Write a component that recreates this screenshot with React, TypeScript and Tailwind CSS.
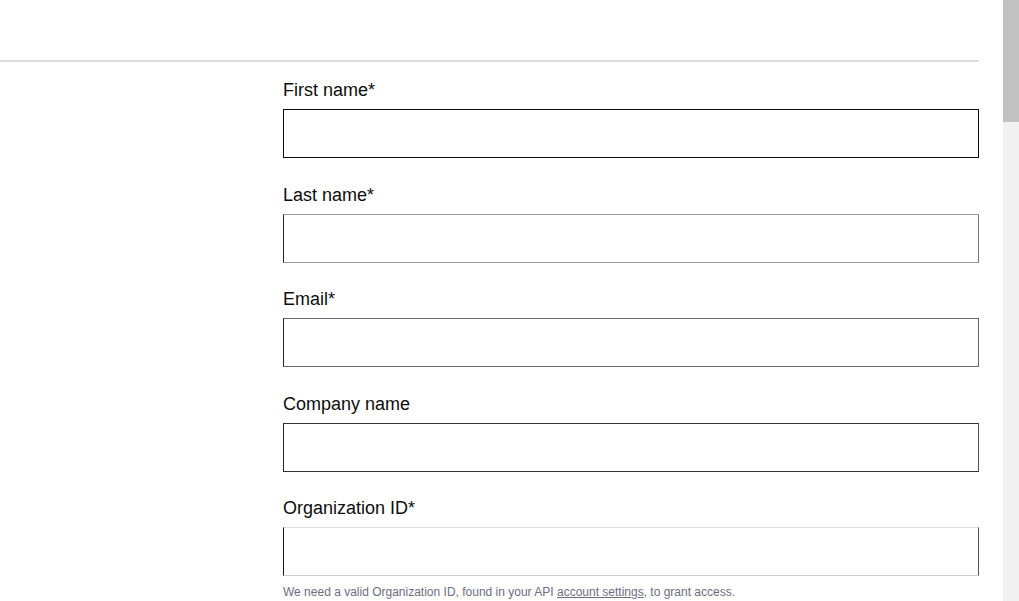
import React from "react";

interface FieldProps {
  label: string;
  required?: boolean;
  borderClass: string;
  help?: React.ReactNode;
}

const Field = ({ label, required, borderClass, help }: FieldProps) => {
  return (
    <div className="flex flex-col">
      <label className="text-[18px] leading-[28px] text-[#0d0d0d] mb-[5px]">
        {label}
        {required && "*"}
      </label>
      <input
        type="text"
        className={`h-[49px] w-full bg-white outline-none border ${borderClass}`}
      />
      {help && (
        <p className="mt-[8px] text-[12px] leading-[16px] text-[#6e6e80]">{help}</p>
      )}
    </div>
  );
};

export default function App() {
  return (
    <div
      className="flex h-[601px] w-[1019px] overflow-hidden bg-white"
      style={{ fontFamily: '"Liberation Sans", Arial, sans-serif' }}
    >
      <div className="flex flex-1 flex-col">
        <div className="h-[60px]" />
        <div className="h-[2px] w-[979px] bg-[#dcdcdc]" />
        <div className="flex pt-[14px]">
          <div className="w-[283px] shrink-0" />
          <div className="flex flex-1 flex-col gap-[22.5px] pr-[24px]">
            <Field label="First name" required borderClass="border-[#0d0d0d]" />
            <Field
              label="Last name"
              required
              borderClass="border-t-[#9a9a9a] border-b-[#9a9a9a] border-l-[#222] border-r-[#777]"
            />
            <Field
              label="Email"
              required
              borderClass="border-t-[#6a6a6a] border-b-[#6a6a6a] border-l-[#222] border-r-[#666]"
            />
            <Field
              label="Company name"
              borderClass="border-t-[#333] border-b-[#333] border-l-[#222] border-r-[#555]"
            />
            <Field
              label="Organization ID"
              required
              borderClass="border-t-[#dcdcdc] border-b-[#cfcfcf] border-l-[#111] border-r-[#555]"
              help={
                <>
                  We need a valid Organization ID, found in your API{" "}
                  <a href="#" className="underline text-[#6e6e80]">
                    account settings
                  </a>
                  , to grant access.
                </>
              }
            />
          </div>
        </div>
      </div>
      <div className="flex w-[16px] shrink-0 flex-col bg-[#f1f1f1]">
        <div className="h-[122px] w-full bg-[#c1c1c1]" />
      </div>
    </div>
  );
}
